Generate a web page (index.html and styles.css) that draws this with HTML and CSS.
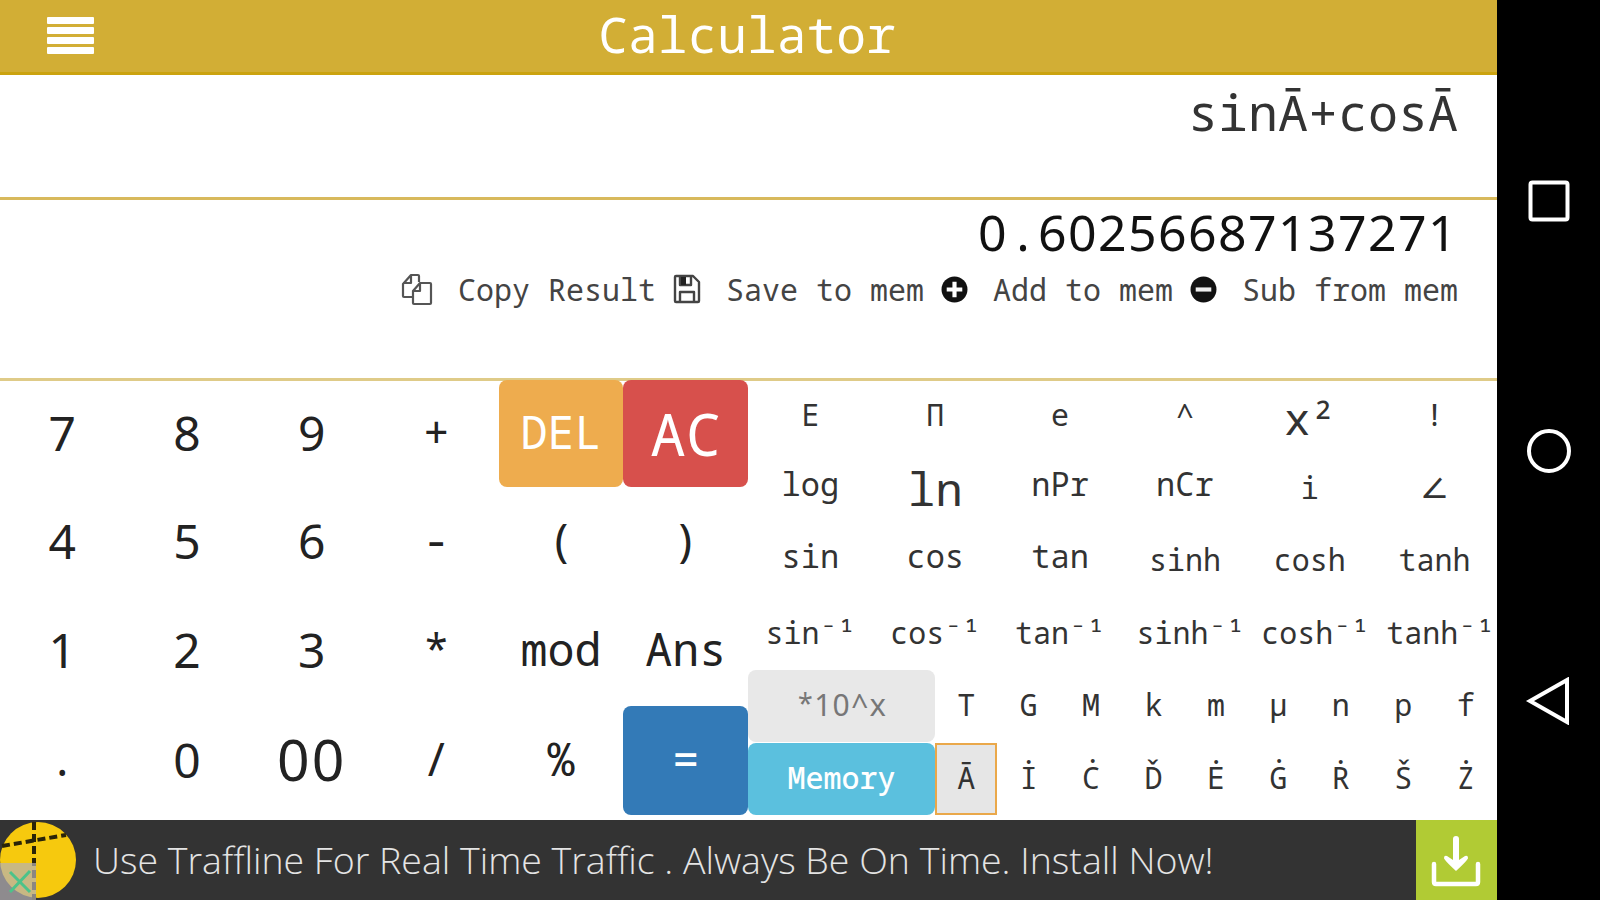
FILE: index.html
```html
<!DOCTYPE html>
<html lang="en">

<head>
    <meta charset="UTF-8">
    <meta name="viewport" content="width=device-width, initial-scale=1.0">
    <title>Calculator</title>
    <link rel="stylesheet" href="styles.css">
</head>

<body>
    <div class="app">
        <header>
            <div class="menu"><i></i><i></i><i></i><i></i></div>
            <h1>Calculator</h1>
        </header>

        <div class="expression">sinĀ+cosĀ</div>

        <div class="result">
            <div class="value">0<span class="point">.</span>60256687137271</div>
            <div class="actions">
                <svg width="32" height="34" viewBox="0 0 32 34" fill="none" stroke="#555" stroke-width="2.2" stroke-linejoin="round">
                    <path d="M12 25H3q-1 0-1-1V12L10 3h7q1 0 1 1v6M10 3v8H2M12 19l7-8h10q1 0 1 1v19q0 1-1 1H13q-1 0-1-1zM19 11v8h-7" />
                </svg>
                <span>Copy Result</span>
                <svg width="28" height="30" viewBox="0 0 28 30" fill="none" stroke="#444" stroke-width="2.4" stroke-linejoin="round">
                    <path d="M3 2h17l6 6v19q0 1-1 1H3q-1 0-1-1V3q0-1 1-1zM7 28V18h14v10M7 2v9h11V2" />
                    <path d="M8 3h5v8H8z" fill="#222" stroke="none" />
                </svg>
                <span>Save to mem</span>
                <svg width="27" height="27" viewBox="0 0 26 26">
                    <circle cx="13" cy="13" r="12.5" fill="#111" />
                    <path d="M5.5 13h15M13 5.5v15" stroke="#fff" stroke-width="4" />
                </svg>
                <span>Add to mem</span>
                <svg width="27" height="27" viewBox="0 0 26 26">
                    <circle cx="13" cy="13" r="12.5" fill="#111" />
                    <path d="M5.5 13h15" stroke="#eee" stroke-width="4" />
                </svg>
                <span>Sub from mem</span>
            </div>
        </div>

        <div class="keys">
            <div class="pad">
                <div class="num">7</div>
                <div class="num">8</div>
                <div class="num">9</div>
                <div>+</div>
                <div class="btn del">DEL</div>
                <div class="btn ac">AC</div>
                <div class="num">4</div>
                <div class="num">5</div>
                <div class="num">6</div>
                <div>-</div>
                <div>(</div>
                <div>)</div>
                <div class="num">1</div>
                <div class="num">2</div>
                <div class="num">3</div>
                <div>*</div>
                <div>mod</div>
                <div>Ans</div>
                <div>.</div>
                <div class="num">0</div>
                <div class="num big">00</div>
                <div>/</div>
                <div>%</div>
                <div class="btn equal">=</div>
            </div>

            <div class="functions">
                <div class="row">
                    <div>E</div>
                    <div>Π</div>
                    <div>e</div>
                    <div>^</div>
                    <div class="square">x<span class="sup">²</span></div>
                    <div>!</div>
                </div>
                <div class="row">
                    <div class="mid">log</div>
                    <div class="ln">ln</div>
                    <div class="mid">nPr</div>
                    <div class="mid">nCr</div>
                    <div class="low">i</div>
                    <div class="angle">∠</div>
                </div>
                <div class="row">
                    <div class="mid">sin</div>
                    <div class="mid">cos</div>
                    <div class="mid">tan</div>
                    <div>sinh</div>
                    <div>cosh</div>
                    <div>tanh</div>
                </div>
                <div class="row">
                    <div>sin⁻¹</div>
                    <div>cos⁻¹</div>
                    <div>tan⁻¹</div>
                    <div>sinh⁻¹</div>
                    <div>cosh⁻¹</div>
                    <div>tanh⁻¹</div>
                </div>
                <div class="row small">
                    <div class="btn power">*<span class="digits">10</span>^x</div>
                    <div>T</div>
                    <div>G</div>
                    <div>M</div>
                    <div>k</div>
                    <div>m</div>
                    <div>μ</div>
                    <div>n</div>
                    <div>p</div>
                    <div>f</div>
                </div>
                <div class="row small">
                    <div class="btn memory">Memory</div>
                    <div class="active">Ā</div>
                    <div>İ</div>
                    <div>Ċ</div>
                    <div>Ď</div>
                    <div>Ė</div>
                    <div>Ġ</div>
                    <div>Ṙ</div>
                    <div>Š</div>
                    <div>Ż</div>
                </div>
            </div>
        </div>

        <footer>
            <svg width="80" height="80" viewBox="0 0 80 80">
                <circle cx="38" cy="40" r="38" fill="#f6c90e" />
                <path d="M34 2v78" stroke="#2a2408" stroke-width="4" stroke-dasharray="8 4" />
                <path d="M2 26L66 15" stroke="#2a2408" stroke-width="4" stroke-dasharray="8 4" />
                <path d="M0 43h36v37H0z" fill="#b5b0b5" fill-opacity=".7" />
                <path d="M10 52l20 20M30 51L10 72" stroke="#4cc38a" stroke-width="3" />
            </svg>
            <div class="ad">Use Traffline For Real Time Traffic . Always Be On Time. Install Now!</div>
            <div class="install">
                <svg width="80" height="80" viewBox="0 0 80 80" fill="none" stroke="#fff">
                    <path d="M18 44v18q0 2 2 2h40q2 0 2-2V44" stroke-width="4.5" stroke-linecap="round" />
                    <path d="M40 19v26" stroke-width="6" stroke-linecap="round" />
                    <path d="M28 38q0-3 3-2l9 6l9-6q3-1 3 2q0 2-12 13q-12-11-12-13z" fill="#fff" stroke="none" />
                </svg>
            </div>
        </footer>
    </div>

    <nav>
        <svg width="48" height="48" viewBox="0 0 48 48">
            <rect x="5.5" y="5.5" width="37" height="37" rx="2" />
        </svg>
        <svg width="48" height="48" viewBox="0 0 48 48">
            <circle cx="24" cy="24" r="20" />
        </svg>
        <svg width="48" height="48" viewBox="0 0 48 48">
            <path d="M5 24L42 3v42z" />
        </svg>
    </nav>
</body>

</html>
```
FILE: styles.css
```css
* {
    margin: 0;
    padding: 0;
    box-sizing: border-box;
}

body,
html {
    height: 100%;
}

body {
    display: flex;
    overflow: hidden;
    background-color: #000;
    color: #333;
    font-family: "Droid Sans Mono", "Noto Sans Mono", "DejaVu Sans Mono", monospace;
    font-size: 30px;
}

svg {
    display: block;
    flex: none;
}

.app {
    flex: 0 0 1497px;
    display: flex;
    flex-direction: column;
    min-width: 0;
    background-color: #fff;
}

header {
    flex: 0 0 75px;
    display: flex;
    align-items: center;
    background-color: #d2ae35;
    border-bottom: 3px solid #cba30f;
}

.menu {
    display: flex;
    flex-direction: column;
    gap: 3px;
    width: 47px;
    margin-left: 47px;
    margin-bottom: 2px;
}

.menu i {
    height: 7px;
    border-radius: 1px;
    background-color: #fff;
}

h1 {
    flex: 1;
    padding: 0 97px 3px 0;
    color: #fff;
    font-size: 49.6px;
    font-weight: normal;
    line-height: 69px;
    text-align: center;
}

.expression {
    flex: 0 0 125px;
    padding: 8px 39px 0 0;
    border-bottom: 3px solid #d8b95c;
    font-size: 50px;
    line-height: 58px;
    text-align: right;
}

.result {
    flex: 0 0 181px;
    padding-right: 39px;
    border-bottom: 3px solid #dfcb88;
}

.value {
    padding: 2px 0;
    font-family: "Noto Sans", sans-serif;
    font-size: 50px;
    letter-spacing: 1.4px;
    line-height: 60px;
    text-align: right;
    color: #111;
}

.point {
    font-family: "Noto Sans Mono", "DejaVu Sans Mono", monospace;
    letter-spacing: 0;
}

.actions {
    display: flex;
    align-items: center;
    justify-content: flex-end;
    height: 50px;
    color: #444;
}

.actions span {
    margin-right: 17px;
    margin-left: 25px;
    white-space: nowrap;
}

.actions span:last-child {
    margin-right: 0;
}

.keys {
    flex: 0 0 440px;
    display: flex;
    margin-top: -1px;
}

.pad {
    flex: 0 0 748px;
    display: grid;
    grid-template-columns: repeat(6, 1fr);
    grid-template-rows: 107px 109px 110px 109px;
    font-size: 45px;
    color: #222;
}

.pad > div {
    display: flex;
    align-items: center;
    justify-content: center;
    padding-bottom: 5px;
}

.btn {
    border-radius: 8px;
    color: #fff;
}

.pad .num {
    padding-bottom: 3px;
    font-family: "Noto Sans", sans-serif;
    font-size: 48px;
}

.pad .big {
    font-size: 57px;
    letter-spacing: 2px;
}

.del {
    background-color: #eeac4e;
}

.pad .ac {
    padding-bottom: 2px;
    background-color: #d7504c;
    font-size: 59px;
}

.equal {
    background-color: #337ab7;
}

.functions {
    flex: 1;
    display: flex;
    flex-direction: column;
    min-width: 0;
}

.row {
    flex: 0 0 72.5px;
    display: flex;
    min-height: 0;
}

.row > div {
    flex: 1 1 0;
    min-width: 0;
    padding: 0 14px;
    line-height: 70px;
    text-align: center;
    white-space: nowrap;
}

.row .mid {
    font-size: 32px;
    line-height: 62px;
}

.row .low {
    line-height: 69px;
}

.row .angle {
    font-size: 40px;
    line-height: 60px;
}

.row .ln {
    font-size: 46px;
    line-height: 71px;
}

.row .square {
    font-size: 44px;
    line-height: 76px;
}

.sup {
    font-size: 42px;
    line-height: 1;
    vertical-align: -1px;
}

.row.small > div {
    padding: 0;
    line-height: 69px;
}

.row.small .btn {
    flex: 0 0 187px;
    height: 72px;
}

.row .power {
    background-color: #e8e8e8;
    color: #777;
}

.digits {
    font-family: "Noto Sans", sans-serif;
    letter-spacing: 1px;
}

.row .memory {
    background-color: #5bc0de;
    font-weight: 500;
}

.row .active {
    background-color: #e6e6e6;
    box-shadow: inset 0 0 0 2px #eaa84a;
}

footer {
    flex: 0 0 80px;
    display: flex;
    background-color: #333;
}

.ad {
    flex: 1;
    padding-left: 13px;
    color: #e4e4e4;
    font-family: "Open Sans", sans-serif;
    font-size: 37.5px;
    font-weight: 300;
    line-height: 80px;
    white-space: nowrap;
}

.install {
    flex: 0 0 81px;
    background-color: #b1cb34;
}

nav {
    flex: 1;
    display: flex;
    flex-direction: column;
    align-items: center;
    gap: 202px;
    padding-top: 177px;
}

nav svg {
    fill: none;
    stroke: #fff;
    stroke-width: 4;
}
```
